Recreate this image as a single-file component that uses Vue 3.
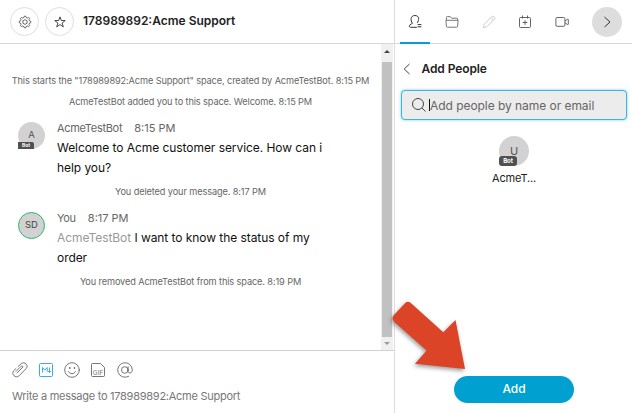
<script setup>
const notices = [
  'This starts the "178989892:Acme Support" space, created by AcmeTestBot. 8:15 PM',
  'AcmeTestBot added you to this space. Welcome. 8:15 PM',
]
</script>

<template>
  <div class="app">
    <main class="chat">
      <header class="bar">
        <button class="round" aria-label="Settings">
          <svg width="14" height="14" viewBox="0 0 14 14" fill="none" stroke="#444" stroke-width=".8" stroke-linejoin="round">
            <path d="M5.900 2.500 6.300 1.200h1.400l.4 1.300 1.300.5 1.200-.6 1 1-.6 1.200.5 1.300 1.300.4v1.400l-1.300.4-.5 1.300.6 1.200-1 1-1.200-.6-1.300.5-.4 1.300H6.300l-.4-1.300-1.300-.5-1.200.6-1-1 .6-1.200-.5-1.300-1.300-.4V6.300l1.300-.4.5-1.300-.6-1.200 1-1 1.200.6z" />
            <path d="M7 4.600 9.100 5.800v2.400L7 9.400 4.900 8.200V5.800z" />
          </svg>
        </button>
        <button class="round" aria-label="Favorite">
          <svg width="12" height="12" viewBox="0 0 12 12" fill="none" stroke="#333" stroke-width=".9" stroke-linejoin="round">
            <path d="M6 .9 7.3 4.5 11.2 4.6 8.1 7 9.3 10.9 6 8.6 2.7 10.9 3.9 7 .8 4.6 4.7 4.5z" />
          </svg>
        </button>
        <h1 class="title">178989892:Acme Support</h1>
      </header>

      <section class="scroller">
        <div class="feed">
          <p v-for="n in notices" :key="n" class="notice">{{ n }}</p>
          <article class="message">
            <div class="avatar">A<span class="bot">Bot</span></div>
            <div>
              <div class="meta"><span class="who">AcmeTestBot</span><span>8:15 PM</span></div>
              <p class="body">Welcome to Acme customer service. How can i<br />help you?</p>
            </div>
          </article>
          <p class="notice">You deleted your message. 8:17 PM</p>
          <article class="message">
            <div class="avatar me">SD</div>
            <div>
              <div class="meta"><span class="who">You</span><span>8:17 PM</span></div>
              <p class="body"><span class="mention">AcmeTestBot</span> I want to know the status of my<br />order</p>
            </div>
          </article>
          <p class="notice">You removed AcmeTestBot from this space. 8:19 PM</p>
        </div>
        <div class="track">
          <i class="tri up"></i>
          <div class="thumb"></div>
          <i class="tri down"></i>
        </div>
      </section>

      <footer class="composer">
        <div class="tools">
          <svg width="16" height="16" viewBox="0 0 16 16" fill="none" stroke="#666" stroke-width=".9" stroke-linecap="round">
            <path d="M6.200 4.400 9.300 1.600C12.500-.9 17 3.200 14.300 6.400L7.300 13.600C3.700 17-1.300 12.300 1.800 8.600L4 6.500M5 11 10.600 5.400M10.600 5.400C11.400 4.400 10.200 3.300 9.200 4.200L4 9.400" />
          </svg>
          <svg width="16" height="16" viewBox="0 0 16 16" fill="none" stroke="#39aede" stroke-width="1">
            <rect x="1.500" y="1.500" width="13" height="13" rx="1" />
            <path d="M4.500 10.500v-5l2.300 2.700 2.400-2.700v4.200M11.500 5.500v5M9.800 8.900l1.700 1.700 1.300-1.700" />
          </svg>
          <svg width="16" height="16" viewBox="0 0 16 16" fill="none" stroke="#666" stroke-width=".9" stroke-linecap="round">
            <circle cx="8" cy="8" r="7.300" />
            <path d="M4.500 9.500c1.200 3 5.800 3 7 0" />
            <circle cx="5.700" cy="6" r=".4" fill="#555" /><circle cx="10.300" cy="6" r=".4" fill="#555" />
          </svg>
          <svg width="16" height="16" viewBox="0 0 16 16" fill="none" stroke="#666" stroke-width=".9">
            <path d="M2.500 1.500h8l4 4v8a1 1 0 0 1-1 1h-11a1 1 0 0 1-1-1v-11a1 1 0 0 1 1-1z" />
            <text class="gif" x="8" y="12.500" text-anchor="middle">GIF</text>
          </svg>
          <svg width="16" height="16" viewBox="0 0 16 16" fill="none" stroke="#666" stroke-width=".9" stroke-linecap="round">
            <circle cx="7.800" cy="8" r="3.300" />
            <path d="M11.100 4.800v4.500c0 2.500 4.200 2.500 4.200-1.300a7.300 7.300 0 1 0-3.600 6.300" />
          </svg>
        </div>
        <p class="placeholder">Write a message to 178989892:Acme Support</p>
      </footer>
    </main>

    <aside class="panel">
      <nav class="bar tabs">
        <span class="tab active">
          <svg width="15" height="15" viewBox="0 0 15 15" fill="none" stroke="#333" stroke-width="1" stroke-linecap="round">
            <path d="M8.500 13.300H2.800c-1.500 0-1.900-1-1.200-2 .8-1.100 2.200-1.400 2.900-2C2.300 6.800 2.200 1.500 6.900 1.500S11.200 6.300 9.500 8.700M10 10.600h3M10 12.800h3" />
          </svg>
        </span>
        <span class="tab">
          <svg width="14" height="14" viewBox="0 0 14 14" fill="none" stroke="#666" stroke-width=".9" stroke-linejoin="round">
            <path d="M1.400 5.200V2.500q0-.9.900-.9h2.900l1.400 1.600h5.100q.9 0 .9.900v1.100M.9 5.300h12.200l-.5 6q-.1.900-1 .900H2.400q-.9 0-1-.9z" />
          </svg>
        </span>
        <span class="tab">
          <svg width="14" height="14" viewBox="0 0 14 14" fill="none" stroke="#ccc" stroke-width="1" stroke-linejoin="round">
            <path d="M1.300 12.700 2.200 9.200 9.900 1.600q1-.9 2 0l.5.500q.9 1 0 2L4.800 11.800zM9 2.600l2.400 2.400" />
          </svg>
        </span>
        <span class="tab">
          <svg width="14" height="14" viewBox="0 0 14 14" fill="none" stroke="#555" stroke-width=".9">
            <rect x="1.500" y="2.500" width="11" height="10" rx="1" />
            <path d="M4.500 .5v3M9.500 .5v3M7 5.200v4.600M4.700 7.500h4.600" />
          </svg>
        </span>
        <span class="tab">
          <svg width="14" height="14" viewBox="0 0 14 14" fill="none" stroke="#555" stroke-width=".9" stroke-linejoin="round">
            <rect x=".9" y="2.500" width="9" height="8.800" rx="1.200" />
            <path d="M10 6l2.500-1.800q.8-.2.800.4v4.600q0 .6-.8.400L10 7.800" />
          </svg>
        </span>
        <button class="collapse" aria-label="Close panel">
          <svg width="12" height="14" viewBox="0 0 12 14" fill="none" stroke="#333" stroke-width="1"><path d="M3.500 2 9 7l-5.500 5" /></svg>
        </button>
      </nav>

      <div class="content">
        <div class="heading">
          <svg width="8" height="12" viewBox="0 0 8 12" fill="none" stroke="#444" stroke-width="1"><path d="M6.500 1 1.200 6l5.300 5" /></svg>
          <h2>Add People</h2>
        </div>
        <div class="search">
          <svg width="16" height="16" viewBox="0 0 16 16" fill="none" stroke="#444" stroke-width="1"><circle cx="7" cy="7" r="5.500" /><path d="m11 11 3.500 3.500" /></svg>
          <i class="caret"></i><span>Add people by name or email</span>
        </div>
        <div class="person">
          <div class="avatar big">U<span class="bot">Bot</span></div>
          <span>AcmeT...</span>
        </div>
        <button class="add">Add</button>
      </div>
    </aside>

    <svg class="pointer" width="90" height="90" viewBox="0 0 90 90">
      <path fill="#dc4427" d="M8.500 30.500 20 18.200Q22.800 15.600 25.800 18L58.300 47.300 70.500 35 80 84 30 78.700 41.600 65.500 8.800 36.500Q6.300 33.500 8.500 30.500z" />
    </svg>
  </div>
</template>

<style>
body { background: #fff; }
</style>

<style scoped>
* { box-sizing: border-box; }
.app { position: relative; display: grid; grid-template-columns: 394px 1fr; width: 632px; height: 413px; overflow: hidden; background: #fff; color: #222; font-family: Inter, "Liberation Sans", sans-serif; }
p, h1, h2 { margin: 0; }
svg { display: block; flex: none; }
button { font-family: inherit; padding: 0; border: 0; }
.chat { display: flex; flex-direction: column; min-height: 0; }
.bar { display: flex; align-items: center; height: 44px; flex: none; border-bottom: 1px solid #d5d7d8; }
.chat .bar { padding-left: 10px; gap: 6px; }
.round { display: grid; place-items: center; width: 29px; height: 29px; border: 1px solid #dedede; border-radius: 50%; background: #fff; }
.title { margin-left: 3px; padding-bottom: 2px; font-size: 12px; font-weight: 600; line-height: 18px; white-space: nowrap; }
.scroller { display: flex; flex: 1; min-height: 0; }
.feed { flex: 1; padding-top: 26px; }
.notice { height: 21px; line-height: 21px; font-size: 9.200px; letter-spacing: -.11px; color: #666; text-align: center; white-space: nowrap; }
.message { display: flex; gap: 12px; padding-left: 18px; margin: 6px 0 3px; white-space: nowrap; }
.avatar { position: relative; display: grid; place-items: center; width: 27px; height: 27px; margin-top: 4px; border-radius: 50%; background: #d2d2d2; color: #555; font-size: 9.500px; line-height: 1; }
.avatar:not(.big) { padding-bottom: 2px; }
.me { border: 1px solid #2bb673; color: #444; }
.bot { position: absolute; left: 0; bottom: 0; width: 16px; height: 7px; border-radius: 0 2px 0 0; background: #505050; color: #fff; font-size: 5px; font-weight: 700; line-height: 7px; text-align: center; }
.meta { display: flex; gap: 12px; height: 20px; line-height: 20px; font-size: 11px; color: #666; }
.who { letter-spacing: -.3px; }
.body { font-size: 12px; line-height: 20px; letter-spacing: -.06px; color: #111; }
.mention { color: #999; }
.track { display: flex; flex-direction: column; align-items: center; width: 12px; margin-right: 1px; background: #f0f0f0; }
.thumb { width: 10px; height: 275px; margin: 9px 0 5px; background: #c1c1c1; }
.tri { width: 0; height: 0; border: 3px solid transparent; }
.up { margin-top: 6px; border-top: 0; border-bottom-color: #444; }
.down { border-bottom: 0; border-top-color: #999; }
.composer { height: 63px; flex: none; padding: 11px 11.500px 0; border-top: 1px solid #d0d2d3; }
.tools { display: flex; gap: 10.300px; }
.gif { font-size: 6.500px; fill: #777; stroke: none; }
.placeholder { margin: 9px 0 0 .5px; font-size: 11px; line-height: 18px; letter-spacing: -.26px; color: #777; white-space: nowrap; }
.panel { border-left: 1px solid #ddd; }
.tabs { padding-left: 5.300px; gap: 6.700px; }
.tab { display: grid; place-items: center; width: 30px; height: 44px; }
.tab.active { border-bottom: 2px solid #079fd1; padding-top: 2px; }
.collapse { display: grid; place-items: center; width: 30px; height: 30px; margin-left: 8px; border-radius: 50%; background: #ddd; }
.content { display: flex; flex-direction: column; align-items: center; height: 369px; padding-left: 1px; }
.heading { display: flex; align-items: center; align-self: flex-start; gap: 10.500px; padding: 15px 0 0 7px; height: 34px; }
.heading h2 { font-size: 12px; font-weight: 600; line-height: 18px; letter-spacing: -.1px; }
.search { display: flex; align-items: center; width: 226px; height: 30px; margin-top: 12px; padding-left: 9px; border: 1.500px solid #3cb5de; border-radius: 4px; background: #ececec; box-shadow: 0 0 3px #72cce9; font-size: 12px; letter-spacing: -.05px; color: #666; white-space: nowrap; }
.caret { width: 1px; height: 12px; margin-left: 2px; background: #111; }
.person { display: flex; flex-direction: column; align-items: center; gap: 4px; margin-top: 16px; font-size: 11px; line-height: 16px; letter-spacing: -.15px; }
.big { width: 30px; height: 30px; margin: 0; font-size: 11px; }
.big .bot { width: 18px; height: 10px; border-radius: 3px; font-size: 6px; line-height: 9px; }
.add { width: 120px; height: 27px; margin-top: auto; margin-bottom: 10px; padding-bottom: 2px; border-radius: 14px; background: #00a0d1; color: #fff; font-size: 12px; font-weight: 500; }
.pointer { position: absolute; left: 385px; top: 285px; filter: drop-shadow(-1px 2px 2px rgba(0, 0, 0, .4)); }
</style>
